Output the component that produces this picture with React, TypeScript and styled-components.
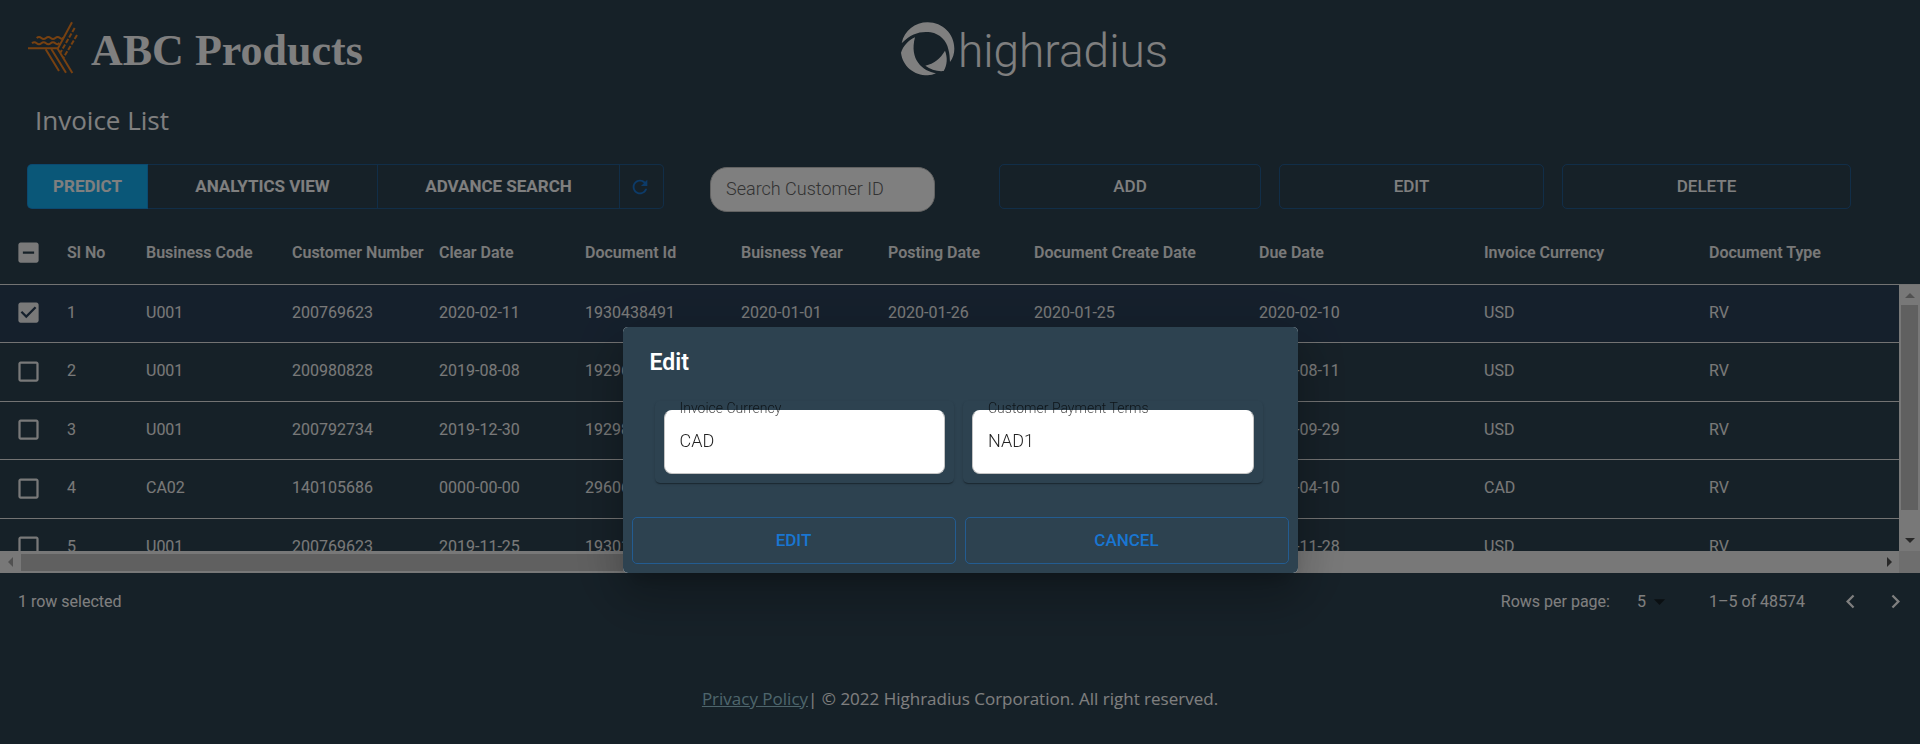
import React, { useEffect, useRef, useState } from "react";
import styled, { createGlobalStyle } from "styled-components";

const GlobalStyle = createGlobalStyle`
  *, *::before, *::after { box-sizing: border-box; }
  body {
    margin: 0;
    background: #2d4250;
    color: #fff;
    font-family: Roboto, "Liberation Sans", sans-serif;
    font-size: 16px;
  }
  button, input, select { font-family: inherit; }
`;

/* ---------- page header ---------- */

const Header = styled.header`
  display: grid;
  grid-template-columns: 1fr auto 1fr;
  height: 98px;
  padding: 21px 27px 0;
`;

const Company = styled.div`
  display: flex;
  align-items: flex-start;
  gap: 13px;
`;

const CompanyName = styled.h1`
  margin: 5px 0 0;
  font-family: "Liberation Serif", serif;
  font-size: 44px;
  line-height: 50px;
  font-weight: 700;
  white-space: nowrap;
`;

const Brand = styled.div`
  display: flex;
  align-items: flex-start;
  margin-left: 148px;
`;

const BrandName = styled.span`
  margin-left: 2px;
  font-family: Roboto, sans-serif;
  font-size: 46px;
  line-height: 60px;
  font-weight: 300;
`;

const PageTitle = styled.h2`
  margin: 0;
  padding: 0 35px;
  height: 66px;
  font-family: "Open Sans", "Noto Sans", sans-serif;
  font-size: 26px;
  line-height: 44px;
  font-weight: 400;
`;

/* ---------- toolbar ---------- */

const Toolbar = styled.div`
  display: grid;
  grid-template-columns: minmax(0, 637fr) minmax(0, 225fr) minmax(0, 870fr);
  column-gap: 46px;
  align-items: start;
  height: 56px;
  padding: 0 69px 0 27px;
`;

const ButtonGroup = styled.div`
  display: grid;
  grid-template-columns: 121fr 230fr 242fr 44fr;
`;

const OutlinedButton = styled.button`
  display: flex;
  align-items: center;
  justify-content: center;
  min-width: 0;
  height: 45px;
  padding: 0 0 2px;
  border: 1px solid rgba(25, 118, 210, 0.5);
  border-radius: 5px;
  background: transparent;
  color: #fff;
  font-size: 17px;
  font-weight: 500;
  white-space: nowrap;
  cursor: pointer;
`;

const GroupButton = styled(OutlinedButton)<{ $filled?: boolean }>`
  border-radius: 0;
  background: ${(p) => (p.$filled ? "#14aff1" : "transparent")};
  font-weight: 700;
  &:not(:first-child) { border-left: 0; }
  &:first-child { border-radius: 5px 0 0 5px; }
  &:last-child { padding: 0 4px 0 0; border-radius: 0 5px 5px 0; color: #1976d2; }
`;

const SearchInput = styled.input`
  width: 100%;
  height: 45px;
  margin: 3px 0 0;
  padding: 0 15px 2px;
  border: 1px solid #c4c4c4;
  border-radius: 17px;
  background: #fff;
  color: #222;
  font-size: 18px;
  font-weight: 300;
  &::placeholder { color: #666; opacity: 1; }
`;

const Actions = styled.div`
  display: grid;
  grid-template-columns: 262fr 265fr 289fr;
  gap: 18px;
  padding-left: 18px;
`;

/* ---------- data grid ---------- */

const Grid = styled.section`
  display: grid;
  grid-template-columns: minmax(0, 1fr) 21px;
  grid-template-rows: 331px 22px;
`;

const TableClip = styled.div`
  overflow: hidden;
`;

const Table = styled.table`
  width: 100%;
  table-layout: fixed;
  border-collapse: separate;
  border-spacing: 0;
`;

const HeadCell = styled.th`
  height: 65px;
  padding: 0 0 0 11px;
  border-bottom: 1px solid #e6e6e6;
  color: #f2f2f2;
  font-size: 16px;
  font-weight: 600;
  text-align: left;
  white-space: nowrap;
`;

const Cell = styled.td`
  height: 58px;
  padding: 0 0 3px 11px;
  border-bottom: 1px solid #e6e6e6;
  color: #f2f2f2;
  font-size: 16px;
  white-space: nowrap;
`;

const Row = styled.tr<{ $selected: boolean }>`
  background: ${(p) => (p.$selected ? "#2b4059" : "transparent")};
  &:nth-child(even) ${Cell} { height: 59px; }
`;

const CheckLabel = styled.label`
  position: relative;
  display: block;
  width: 27px;
  height: 27px;
  margin-left: 4px;
  input {
    position: absolute;
    inset: 0;
    width: 100%;
    height: 100%;
    margin: 0;
    opacity: 0;
    cursor: pointer;
  }
  svg { display: block; }
`;

const RowCheck = styled(CheckLabel)`
  margin-top: 1px;
`;

const VerticalSide = styled.div`
  display: flex;
  flex-direction: column;
  padding-top: 64px;
`;

const VerticalBar = styled.div`
  display: flex;
  flex: 1;
  flex-direction: column;
  align-items: center;
  border-top: 1px solid #e6e6e6;
  background: #f1f1f1;
`;

const HorizontalBar = styled.div`
  display: flex;
  align-items: center;
  background: #f1f1f1;
`;

const BarArrow = styled.span`
  display: flex;
  align-items: center;
  justify-content: center;
  flex: none;
  width: 21px;
  height: 20px;
`;

const VerticalThumb = styled.span`
  width: 17px;
  height: 205px;
  margin-bottom: auto;
  background: #c1c1c1;
`;

const HorizontalThumb = styled.span`
  width: 52%;
  height: 17px;
  margin-right: auto;
  background: #c1c1c1;
`;

const Corner = styled.div`
  background: #dcdcdc;
`;

const Pagination = styled.div`
  display: flex;
  align-items: center;
  height: 56px;
  padding: 0 11px 0 18px;
`;

const Selected = styled.span`
  margin-right: auto;
`;

const PageSize = styled.label`
  display: flex;
  align-items: center;
  margin-right: 33px;
  gap: 27px;
`;

const SelectWrap = styled.span`
  position: relative;
  display: flex;
  align-items: center;
  width: 39px;
  svg {
    position: absolute;
    right: 3px;
    pointer-events: none;
  }
`;

const SizeSelect = styled.select`
  width: 100%;
  padding: 0;
  border: 0;
  appearance: none;
  background: transparent;
  color: #fff;
  font-size: 16px;
`;

const PageButton = styled.button`
  display: flex;
  align-items: center;
  justify-content: center;
  width: 27px;
  height: 27px;
  margin-left: 18px;
  padding: 0;
  border: 0;
  background: transparent;
  color: #fff;
`;

const PageRange = styled.span`
  margin-right: 14px;
`;

const Footer = styled.footer`
  margin-top: 56px;
  font-family: "Open Sans", "Noto Sans", sans-serif;
  font-size: 17px;
  line-height: 28px;
  text-align: center;
  a { color: #9ccbd9; }
`;

/* ---------- dialog ---------- */

const Backdrop = styled.div`
  position: fixed;
  inset: 0;
  display: flex;
  align-items: flex-start;
  justify-content: center;
  padding-top: 327px;
  background: rgba(0, 0, 0, 0.5);
`;

const Paper = styled.div`
  width: 675px;
  max-width: 90%;
  overflow: hidden;
  border-radius: 5px;
  background: #fff;
  box-shadow:
    0 12px 17px -8px rgba(0, 0, 0, 0.2),
    0 27px 43px 3px rgba(0, 0, 0, 0.14),
    0 10px 52px 9px rgba(0, 0, 0, 0.12);
`;

const DialogBody = styled.form`
  background: #2d4250;
`;

const DialogTitle = styled.h2`
  margin: 0;
  padding: 17px 27px 0;
  font-size: 23px;
  line-height: 38px;
  font-weight: 600;
`;

const Fields = styled.div`
  display: grid;
  grid-template-columns: 1fr 1fr;
  gap: 9px;
  padding: 19px 35px 34px 32px;
`;

const FieldCard = styled.div`
  padding: 9px;
  border-radius: 5px;
  box-shadow:
    0 2px 1px -1px rgba(0, 0, 0, 0.2),
    0 1px 1px 0 rgba(0, 0, 0, 0.14),
    0 1px 3px 0 rgba(0, 0, 0, 0.12);
`;

const Field = styled.div`
  position: relative;
  display: flex;
  label {
    position: absolute;
    top: -10px;
    left: 16px;
    color: rgba(0, 0, 0, 0.7);
    font-size: 14px;
    line-height: 16px;
    font-weight: 300;
  }
  input {
    width: 100%;
    height: 64px;
    padding: 0 15px 4px;
    border: 1px solid #c4c4c4;
    border-top-color: #fff;
    border-radius: 8px;
    background: #fff;
    color: rgba(0, 0, 0, 0.87);
    font-size: 18px;
    font-weight: 300;
  }
`;

const DialogActions = styled.div`
  display: grid;
  grid-template-columns: 1fr 1fr;
  gap: 9px;
  padding: 0 9px;
  height: 56px;
`;

const DialogButton = styled(OutlinedButton)`
  height: 47px;
  color: #1976d2;
`;

/* ---------- drawings ---------- */

const PATHS = {
  off: "M19 5v14H5V5h14m0-2H5c-1.1 0-2 .9-2 2v14c0 1.1.9 2 2 2h14c1.1 0 2-.9 2-2V5c0-1.1-.9-2-2-2z",
  on: "M19 3H5c-1.11 0-2 .9-2 2v14c0 1.1.89 2 2 2h14c1.11 0 2-.9 2-2V5c0-1.1-.89-2-2-2zm-9 14l-5-5 1.41-1.41L10 14.17l7.59-7.59L19 8l-9 9z",
  some: "M19 3H5c-1.1 0-2 .9-2 2v14c0 1.1.9 2 2 2h14c1.1 0 2-.9 2-2V5c0-1.1-.9-2-2-2zm-2 10H7v-2h10v2z",
  refresh:
    "M17.65 6.35C16.2 4.9 14.21 4 12 4c-4.42 0-7.99 3.58-7.99 8s3.57 8 7.99 8c3.73 0 6.84-2.55 7.73-6h-2.08c-.82 2.33-3.04 4-5.65 4-3.31 0-6-2.69-6-6s2.69-6 6-6c1.66 0 3.14.69 4.22 1.78L13 11h7V4l-2.35 2.35z",
  previous: "M15.41 7.41L14 6l-6 6 6 6 1.41-1.41L10.83 12z",
  next: "M10 6L8.59 7.41 13.17 12l-4.58 4.59L10 18l6-6z",
  down: "M7 10l5 5 5-5z",
};

function Icon({ name, size, color = "currentColor" }: { name: keyof typeof PATHS; size: number; color?: string }) {
  return (
    <svg width={size} height={size} viewBox="0 0 24 24" fill={color} aria-hidden="true">
      <path d={PATHS[name]} />
    </svg>
  );
}

function CompanyMark() {
  return (
    <svg width="51" height="54" viewBox="81 63 153 162" fill="none" stroke="#ee8222" strokeWidth="6" aria-hidden="true">
      <path d="M84 145H174L216 67" />
      <path d="M110 114q7 -6 14 0t14 0t14 0t14 0t14 0t10 -2" />
      <path d="M96 130q7 -6 14 0t14 0t14 0t14 0t14 0t12 -2" />
      <path d="M224 84L181 158" strokeDasharray="14 5" />
      <path d="M231 105L190 174" strokeDasharray="14 5" />
      <path d="M137 148L177 213M154 147L198 218M172 145L217 219" />
    </svg>
  );
}

function BrandMark() {
  return (
    <svg width="56" height="56" viewBox="60 62 168 168" fill="#fff" aria-hidden="true">
      <path d="M65 129C73 90 105 66 143 66C188 66 223 101 223 145C223 160 219 172 210 185C209 172 209 160 205 147C200 121 180 101 152 96C122 92 94 99 65 129Z" />
      <path d="M105 111C84 121 70 137 63 157C68 198 102 225 143 225C152 225 160 223 168 219C128 213 87 178 105 111Z" />
      <path d="M136 196C162 190 181 175 195 151C203 172 202 193 191 212C172 214 152 208 136 196Z" />
    </svg>
  );
}

function Arrow({ points, color }: { points: string; color: string }) {
  return (
    <svg width="10" height="10" viewBox="0 0 10 10" fill={color} aria-hidden="true">
      <polygon points={points} />
    </svg>
  );
}

/* ---------- data ---------- */

const COLUMNS: [string, number | undefined][] = [
  ["Sl No", 79],
  ["Business Code", 146],
  ["Customer Number", 147],
  ["Clear Date", 146],
  ["Document Id", 156],
  ["Buisness Year", 147],
  ["Posting Date", 146],
  ["Document Create Date", 225],
  ["Due Date", 225],
  ["Invoice Currency", 225],
  ["Document Type", undefined],
];

const ROWS = [
  ["1", "U001", "200769623", "2020-02-11", "1930438491", "2020-01-01", "2020-01-26", "2020-01-25", "2020-02-10", "USD", "RV"],
  ["2", "U001", "200980828", "2019-08-08", "1929646410", "2019-01-01", "2019-07-22", "2019-07-22", "2019-08-11", "USD", "RV"],
  ["3", "U001", "200792734", "2019-12-30", "1929873765", "2019-01-01", "2019-09-14", "2019-09-14", "2019-09-29", "USD", "RV"],
  ["4", "CA02", "140105686", "0000-00-00", "2960623488", "2020-01-01", "2020-03-30", "2020-03-30", "2020-04-10", "CAD", "RV"],
  ["5", "U001", "200769623", "2019-11-25", "1930147974", "2019-01-01", "2019-11-13", "2019-11-13", "2019-11-28", "USD", "RV"],
];

function InvoiceTable() {
  const [checked, setChecked] = useState<string[]>(["1"]);
  const allRef = useRef<HTMLInputElement>(null);
  const all = checked.length === ROWS.length;
  const some = checked.length > 0 && !all;

  useEffect(() => {
    if (allRef.current) allRef.current.indeterminate = some;
  }, [some]);

  const toggle = (id: string) =>
    setChecked((list) => (list.includes(id) ? list.filter((x) => x !== id) : [...list, id]));

  return (
    <>
      <Grid>
        <TableClip>
          <Table>
            <colgroup>
              <col width={56} />
              {COLUMNS.map(([name, width]) => (
                <col key={name} width={width} />
              ))}
            </colgroup>
            <thead>
              <tr>
                <HeadCell>
                  <CheckLabel>
                    <input
                      ref={allRef}
                      type="checkbox"
                      aria-label="Select all rows"
                      checked={all}
                      onChange={() => setChecked(all ? [] : ROWS.map((r) => r[0]))}
                    />
                    <Icon name={all ? "on" : some ? "some" : "off"} size={27} />
                  </CheckLabel>
                </HeadCell>
                {COLUMNS.map(([name]) => (
                  <HeadCell key={name} scope="col">{name}</HeadCell>
                ))}
              </tr>
            </thead>
            <tbody>
              {ROWS.map((row) => {
                const selected = checked.includes(row[0]);
                return (
                  <Row key={row[0]} $selected={selected}>
                    <Cell>
                      <RowCheck>
                        <input
                          type="checkbox"
                          aria-label={`Select row ${row[0]}`}
                          checked={selected}
                          onChange={() => toggle(row[0])}
                        />
                        <Icon name={selected ? "on" : "off"} size={27} />
                      </RowCheck>
                    </Cell>
                    {row.map((value, i) => (
                      <Cell key={i}>{value}</Cell>
                    ))}
                  </Row>
                );
              })}
            </tbody>
          </Table>
        </TableClip>
        <VerticalSide aria-hidden="true">
          <VerticalBar>
            <BarArrow><Arrow points="0,8 5,3 10,8" color="#a3a3a3" /></BarArrow>
            <VerticalThumb />
            <BarArrow><Arrow points="0,2 10,2 5,7" color="#505050" /></BarArrow>
          </VerticalBar>
        </VerticalSide>
        <HorizontalBar aria-hidden="true">
          <BarArrow><Arrow points="7,0 7,10 2,5" color="#a3a3a3" /></BarArrow>
          <HorizontalThumb />
          <BarArrow><Arrow points="3,0 8,5 3,10" color="#505050" /></BarArrow>
        </HorizontalBar>
        <Corner />
      </Grid>
      <Pagination>
        <Selected>{checked.length} row selected</Selected>
        <PageSize>
          Rows per page:
          <SelectWrap>
            <SizeSelect defaultValue="5">
              <option>5</option>
              <option>10</option>
            </SizeSelect>
            <Icon name="down" size={27} color="rgba(0, 0, 0, 0.54)" />
          </SelectWrap>
        </PageSize>
        <PageRange>1–5 of 48574</PageRange>
        <PageButton aria-label="Previous page"><Icon name="previous" size={27} /></PageButton>
        <PageButton aria-label="Next page"><Icon name="next" size={27} /></PageButton>
      </Pagination>
    </>
  );
}

function EditDialog() {
  return (
    <Backdrop>
      <Paper role="dialog" aria-modal="true" aria-labelledby="edit-title">
        <DialogBody onSubmit={(e) => e.preventDefault()}>
          <DialogTitle id="edit-title">Edit</DialogTitle>
          <Fields>
            <FieldCard>
              <Field>
                <input id="currency" defaultValue="CAD" />
                <label htmlFor="currency">Invoice Currency</label>
              </Field>
            </FieldCard>
            <FieldCard>
              <Field>
                <input id="terms" defaultValue="NAD1" />
                <label htmlFor="terms">Customer Payment Terms</label>
              </Field>
            </FieldCard>
          </Fields>
          <DialogActions>
            <DialogButton type="submit">EDIT</DialogButton>
            <DialogButton type="button">CANCEL</DialogButton>
          </DialogActions>
        </DialogBody>
      </Paper>
    </Backdrop>
  );
}

export default function App() {
  return (
    <>
      <GlobalStyle />
      <Header>
        <Company>
          <CompanyMark />
          <CompanyName>ABC Products</CompanyName>
        </Company>
        <Brand>
          <BrandMark />
          <BrandName>highradius</BrandName>
        </Brand>
      </Header>
      <main>
        <PageTitle>Invoice List</PageTitle>
        <Toolbar>
          <ButtonGroup>
            <GroupButton $filled>PREDICT</GroupButton>
            <GroupButton>ANALYTICS VIEW</GroupButton>
            <GroupButton>ADVANCE SEARCH</GroupButton>
            <GroupButton aria-label="Refresh"><Icon name="refresh" size={22} /></GroupButton>
          </ButtonGroup>
          <SearchInput type="search" placeholder="Search Customer ID" aria-label="Search Customer ID" />
          <Actions>
            <OutlinedButton>ADD</OutlinedButton>
            <OutlinedButton>EDIT</OutlinedButton>
            <OutlinedButton>DELETE</OutlinedButton>
          </Actions>
        </Toolbar>
        <InvoiceTable />
      </main>
      <Footer>
        <a href="#privacy">Privacy Policy</a>| © 2022 Highradius Corporation. All right reserved.
      </Footer>
      <EditDialog />
    </>
  );
}
